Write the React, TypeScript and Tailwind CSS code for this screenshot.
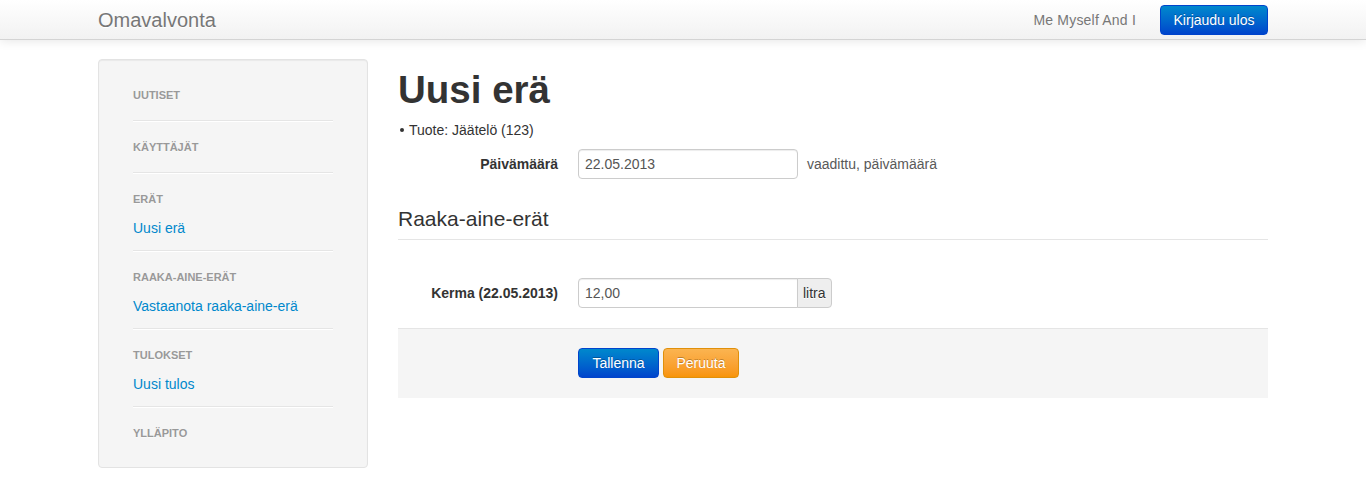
import type { ReactNode } from "react";

const font = { fontFamily: '"Liberation Sans", Arial, sans-serif' };

function NavHeader({ children }: { children: ReactNode }) {
  return (
    <div className="h-[20px] text-[11px] font-bold uppercase leading-[20px] text-[#999] [text-shadow:0_1px_0_rgba(255,255,255,0.5)]">
      {children}
    </div>
  );
}

function NavLink({ children }: { children: ReactNode }) {
  return (
    <div className="mt-[9px] h-[20px] text-[14px] leading-[20px] text-[#0088cc]">
      {children}
    </div>
  );
}

function Divider() {
  return <div className="h-[2px] border-b border-white bg-[#e5e5e5]" />;
}

function Sidebar() {
  return (
    <div className="w-[270px] shrink-0 rounded border border-[#e3e3e3] bg-[#f5f5f5] px-[34px] pt-[25px] pb-[24px] shadow-[inset_0_1px_1px_rgba(0,0,0,0.05)]">
      <NavHeader>Uutiset</NavHeader>
      <div className="mt-[15px] mb-[15px]">
        <Divider />
      </div>
      <NavHeader>Käyttäjät</NavHeader>
      <div className="mt-[15px] mb-[15px]">
        <Divider />
      </div>
      <NavHeader>Erät</NavHeader>
      <NavLink>Uusi erä</NavLink>
      <div className="mt-[12px] mb-[15px]">
        <Divider />
      </div>
      <NavHeader>Raaka-aine-erät</NavHeader>
      <NavLink>Vastaanota raaka-aine-erä</NavLink>
      <div className="mt-[12px] mb-[15px]">
        <Divider />
      </div>
      <NavHeader>Tulokset</NavHeader>
      <NavLink>Uusi tulos</NavLink>
      <div className="mt-[12px] mb-[15px]">
        <Divider />
      </div>
      <NavHeader>Ylläpito</NavHeader>
    </div>
  );
}

export default function App() {
  return (
    <div style={font} className="min-h-screen bg-white text-[14px] leading-[20px] text-[#333]">
      <div className="h-[40px] border-b border-[#d4d4d4] bg-gradient-to-b from-white to-[#f2f2f2] shadow-[0_1px_10px_rgba(0,0,0,0.1)]">
        <div className="mx-auto flex h-full w-[1170px] items-center justify-between">
          <div className="text-[20px] font-light leading-[20px] text-[#777] [text-shadow:0_1px_0_#fff]">
            Omavalvonta
          </div>
          <div className="flex items-center">
            <span className="mr-[24px] tracking-[0.2px] text-[#777]">Me Myself And I</span>
            <button className="h-[30px] w-[108px] rounded border border-[#0044cc] bg-gradient-to-b from-[#0088cc] to-[#0044cc] text-[14px] leading-[20px] text-white [text-shadow:0_-1px_0_rgba(0,0,0,0.25)]">
              Kirjaudu ulos
            </button>
          </div>
        </div>
      </div>

      <div className="mx-auto mt-[19px] flex w-[1170px] gap-[30px]">
        <Sidebar />

        <div className="w-[870px]">
          <h1 className="mt-[11px] mb-[10px] text-[38.5px] font-bold leading-[40px] text-[#333]">
            Uusi erä
          </h1>
          <div className="flex h-[20px] items-center pl-[2px]">
            <span className="mr-[5px] h-[4px] w-[4px] rounded-full bg-[#333]" />
            <span>Tuote: Jäätelö (123)</span>
          </div>

          <div className="mt-[9px] flex">
            <label className="w-[160px] pt-[5px] text-right font-bold">Päivämäärä</label>
            <div className="ml-[20px] flex items-center">
              <input
                readOnly
                value="22.05.2013"
                className="h-[30px] w-[220px] rounded border border-[#ccc] bg-white px-[6px] text-[14px] text-[#555] shadow-[inset_0_1px_1px_rgba(0,0,0,0.075)] outline-none"
              />
              <span className="ml-[9px] text-[#595959]">vaadittu, päivämäärä</span>
            </div>
          </div>

          <div className="mt-[20px] h-[41px] border-b border-[#e5e5e5] text-[21px] leading-[40px] text-[#333]">
            Raaka-aine-erät
          </div>

          <div className="mt-[38px] flex">
            <label className="w-[160px] pt-[5px] text-right font-bold">Kerma (22.05.2013)</label>
            <div className="ml-[20px] flex">
              <input
                readOnly
                value="12,00"
                className="h-[30px] w-[220px] rounded-l border border-[#ccc] bg-white px-[6px] text-[14px] text-[#555] shadow-[inset_0_1px_1px_rgba(0,0,0,0.075)] outline-none"
              />
              <span className="-ml-px h-[30px] rounded-r border border-[#ccc] bg-[#eee] px-[5px] leading-[28px] text-[#333] [text-shadow:0_1px_0_#fff]">
                litra
              </span>
            </div>
          </div>

          <div className="mt-[20px] border-t border-[#e5e5e5] bg-[#f5f5f5] pt-[19px] pb-[20px] pl-[180px]">
            <div className="flex gap-[4px]">
              <button className="h-[30px] w-[81px] rounded border border-[#0044cc] bg-gradient-to-b from-[#0088cc] to-[#0044cc] leading-[20px] text-white [text-shadow:0_-1px_0_rgba(0,0,0,0.25)]">
                Tallenna
              </button>
              <button className="h-[30px] w-[76px] rounded border border-[#e0900a] bg-gradient-to-b from-[#fbb450] to-[#f89406] leading-[20px] text-white [text-shadow:0_-1px_0_rgba(0,0,0,0.25)]">
                Peruuta
              </button>
            </div>
          </div>
        </div>
      </div>
    </div>
  );
}
